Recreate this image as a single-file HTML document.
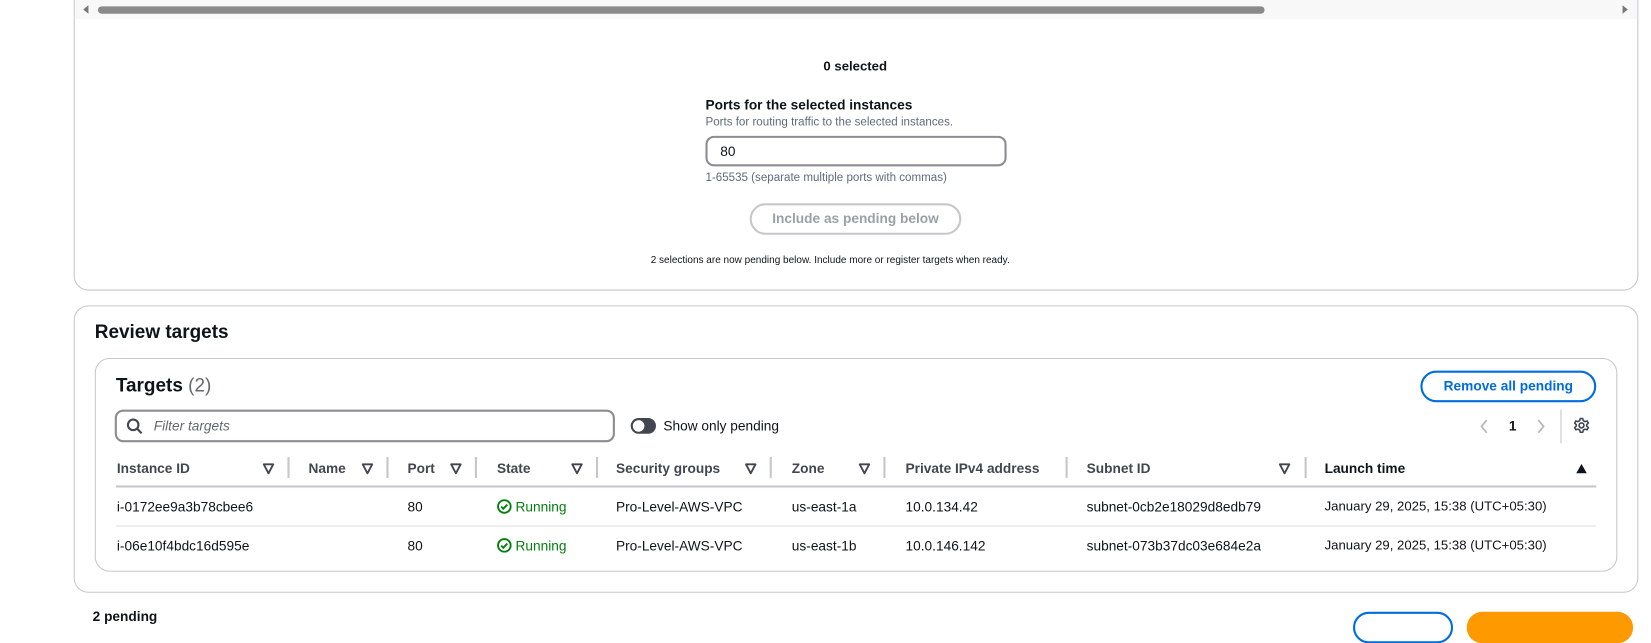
<!DOCTYPE html>
<html><head><style>
*{margin:0;padding:0;box-sizing:border-box}
body{width:1651px;height:616px;background:#fff;font-family:"Liberation Sans",sans-serif;color:#0f141a;position:relative;overflow:hidden}
#w{position:absolute;left:0;top:0;width:1568px;height:585px;transform:scale(1.05293);transform-origin:0 0}
.a{position:absolute;white-space:nowrap}
.card{position:absolute;border:1px solid #c6c6cd;border-radius:14px;background:#fff}
.h{font-size:13px;font-weight:bold;color:#424650;top:437px}
.f{position:absolute;top:439px}
.dv{position:absolute;width:2px;height:20px;background:#c6c6cd;top:434px}
.c{font-size:13px;color:#0f141a}
.g{color:#037f0c}
</style></head><body><div id="w">
<svg width="0" height="0" style="position:absolute"><defs><symbol id="fi" viewBox="0 0 12 12"><path d="M1.5 2h9L6 10.5z" fill="none" stroke="#424650" stroke-width="1.8" stroke-linejoin="round"/></symbol></defs></svg>
<div class="card" style="left:70px;top:-20px;width:1486px;height:296px"></div>
<div class="a" style="left:71px;top:0;width:1484px;height:18px;background:#f8f8f8"></div>
<div class="a" style="left:93px;top:6px;width:1108px;height:7px;background:#8a8a8a;border-radius:4px"></div>
<div class="a" style="left:79px;top:5px;width:0;height:0;border-top:4px solid transparent;border-bottom:4px solid transparent;border-right:5px solid #777"></div>
<div class="a" style="left:1541px;top:5px;width:0;height:0;border-top:4px solid transparent;border-bottom:4px solid transparent;border-left:5px solid #777"></div>

<div class="a" style="left:782px;top:56px;font-size:12.5px;font-weight:bold">0 selected</div>
<div class="a" style="left:670px;top:92px;font-size:13px;font-weight:bold">Ports for the selected instances</div>
<div class="a" style="left:670px;top:110px;font-size:11px;color:#5f6b7a">Ports for routing traffic to the selected instances.</div>
<div class="a" style="left:670px;top:129px;width:286px;height:29px;border:2px solid #8c8c94;border-radius:8px;font-size:13px;padding:5px 0 0 12px">80</div>
<div class="a" style="left:670px;top:163px;font-size:11px;color:#5f6b7a">1-65535 (separate multiple ports with commas)</div>
<div class="a" style="left:712px;top:193px;width:201px;height:30px;border:2px solid #c6c6cd;border-radius:16px;font-size:13px;font-weight:bold;color:#9ba0a8;text-align:center;line-height:26px">Include as pending below</div>
<div class="a" style="left:618px;top:242px;font-size:9.5px;color:#0f141a">2 selections are now pending below. Include more or register targets when ready.</div>

<div class="card" style="left:70px;top:290px;width:1486px;height:273px"></div>
<div class="a" style="left:90px;top:305px;font-size:18px;font-weight:bold">Review targets</div>
<div class="card" style="left:90px;top:340px;width:1446px;height:203px"></div>
<div class="a" style="left:110px;top:356px;font-size:18px;font-weight:bold">Targets <span style="font-weight:normal;color:#656871">(2)</span></div>
<div class="a" style="left:1349px;top:352px;width:167px;height:30px;border:2px solid #006ce0;border-radius:16px;color:#006ce0;font-size:13px;font-weight:bold;text-align:center;line-height:26px">Remove all pending</div>
<div class="a" style="left:109px;top:389px;width:475px;height:31px;border:2px solid #8c8c94;border-radius:8px"></div>
<svg class="a" style="left:120px;top:397px" width="16" height="16" viewBox="0 0 16 16"><circle cx="6.5" cy="6.5" r="5" fill="none" stroke="#424650" stroke-width="2"/><path d="M10 10l4.5 4.5" stroke="#424650" stroke-width="2"/></svg>
<div class="a" style="left:146px;top:397px;font-size:13px;font-style:italic;color:#656871">Filter targets</div>
<div class="a" style="left:599px;top:397px;width:24px;height:15px;background:#424650;border-radius:8px"></div>
<div class="a" style="left:601px;top:399px;width:11px;height:11px;background:#fff;border-radius:50%"></div>
<div class="a" style="left:630px;top:397px;font-size:13px">Show only pending</div>
<svg class="a" style="left:1404px;top:397px" width="10" height="16" viewBox="0 0 10 16"><path d="M8 2L3 8l5 6" fill="none" stroke="#b4b4bb" stroke-width="1.6"/></svg>
<div class="a" style="left:1433px;top:397px;font-size:13px;font-weight:bold">1</div>
<svg class="a" style="left:1459px;top:397px" width="10" height="16" viewBox="0 0 10 16"><path d="M2 2l5 6-5 6" fill="none" stroke="#b4b4bb" stroke-width="1.6"/></svg>
<div class="a" style="left:1482px;top:389px;width:1px;height:32px;background:#c6c6cd"></div>
<svg class="a" style="left:1494px;top:396px" width="16" height="16" viewBox="0 0 16 16"><circle cx="8" cy="8" r="2.3" fill="none" stroke="#424650" stroke-width="1.6"/><path d="M6.8 1.5h2.4l.5 2 1.6.9 2-.6 1.2 2-1.5 1.5v1.4l1.5 1.5-1.2 2-2-.6-1.6.9-.5 2H6.8l-.5-2-1.6-.9-2 .6-1.2-2 1.5-1.5V7.3L1.5 5.8l1.2-2 2 .6 1.6-.9z" fill="none" stroke="#424650" stroke-width="1.5" stroke-linejoin="round"/></svg>

<div class="a h" style="left:111px">Instance ID</div><svg class="f" style="left:249px" width="12" height="12"><use href="#fi"/></svg><div class="dv" style="left:273px"></div>
<div class="a h" style="left:293px">Name</div><svg class="f" style="left:343px" width="12" height="12"><use href="#fi"/></svg><div class="dv" style="left:367px"></div>
<div class="a h" style="left:387px">Port</div><svg class="f" style="left:427px" width="12" height="12"><use href="#fi"/></svg><div class="dv" style="left:451px"></div>
<div class="a h" style="left:472px">State</div><svg class="f" style="left:542px" width="12" height="12"><use href="#fi"/></svg><div class="dv" style="left:566px"></div>
<div class="a h" style="left:585px">Security groups</div><svg class="f" style="left:707px" width="12" height="12"><use href="#fi"/></svg><div class="dv" style="left:731px"></div>
<div class="a h" style="left:752px">Zone</div><svg class="f" style="left:815px" width="12" height="12"><use href="#fi"/></svg><div class="dv" style="left:839px"></div>
<div class="a h" style="left:860px">Private IPv4 address</div><div class="dv" style="left:1012px"></div>
<div class="a h" style="left:1032px">Subnet ID</div><svg class="f" style="left:1214px" width="12" height="12"><use href="#fi"/></svg><div class="dv" style="left:1239px"></div>
<div class="a h" style="left:1258px;color:#0f141a">Launch time</div><svg class="a" style="left:1496px;top:439px" width="12" height="12" viewBox="0 0 12 12"><path d="M1 10.5h10L6 1.5z" fill="#0f141a"/></svg>
<div class="a" style="left:110px;top:461px;width:1406px;height:2px;background:#c6c6cd"></div>
<div class="a" style="left:110px;top:499px;width:1406px;height:1px;background:#e0e0e4"></div>

<div class="a c" style="left:111px;top:474px">i-0172ee9a3b78cbee6</div>
<div class="a c" style="left:387px;top:474px">80</div>
<div class="a c g" style="left:472px;top:474px">
<svg width="14" height="14" viewBox="0 0 14 14" style="vertical-align:-2px"><circle cx="7" cy="7" r="6" fill="none" stroke="#037f0c" stroke-width="1.8"/><path d="M4 7.2l2 2 3.8-4" fill="none" stroke="#037f0c" stroke-width="1.8"/></svg> Running</div>
<div class="a c" style="left:585px;top:474px">Pro-Level-AWS-VPC</div>
<div class="a c" style="left:752px;top:474px">us-east-1a</div>
<div class="a c" style="left:860px;top:474px">10.0.134.42</div>
<div class="a c" style="left:1032px;top:474px">subnet-0cb2e18029d8edb79</div>
<div class="a c" style="left:1258px;top:474px;font-size:12.5px">January 29, 2025, 15:38 (UTC+05:30)</div>

<div class="a c" style="left:111px;top:511px">i-06e10f4bdc16d595e</div>
<div class="a c" style="left:387px;top:511px">80</div>
<div class="a c g" style="left:472px;top:511px">
<svg width="14" height="14" viewBox="0 0 14 14" style="vertical-align:-2px"><circle cx="7" cy="7" r="6" fill="none" stroke="#037f0c" stroke-width="1.8"/><path d="M4 7.2l2 2 3.8-4" fill="none" stroke="#037f0c" stroke-width="1.8"/></svg> Running</div>
<div class="a c" style="left:585px;top:511px">Pro-Level-AWS-VPC</div>
<div class="a c" style="left:752px;top:511px">us-east-1b</div>
<div class="a c" style="left:860px;top:511px">10.0.146.142</div>
<div class="a c" style="left:1032px;top:511px">subnet-073b37dc03e684e2a</div>
<div class="a c" style="left:1258px;top:511px;font-size:12.5px">January 29, 2025, 15:38 (UTC+05:30)</div>

<div class="a" style="left:88px;top:578px;font-size:13px;font-weight:bold">2 pending</div>
<div class="a" style="left:1285px;top:581px;width:95px;height:30px;border:2px solid #006ce0;border-radius:16px"></div>
<div class="a" style="left:1393px;top:581px;width:158px;height:30px;background:#ff9900;border-radius:16px"></div>
</div></body></html>
